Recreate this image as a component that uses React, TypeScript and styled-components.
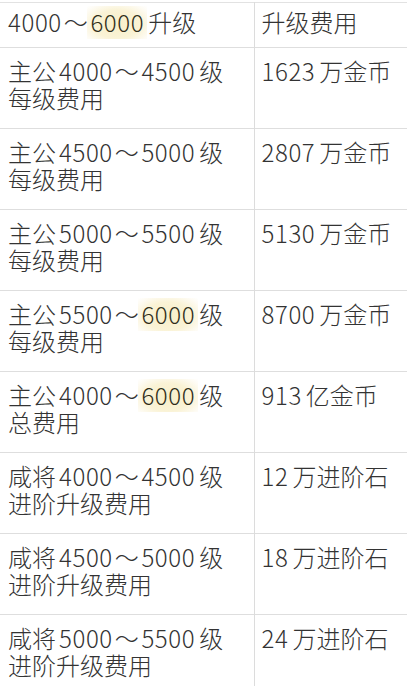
import React from 'react';
import styled, { createGlobalStyle } from 'styled-components';

const GlobalStyle = createGlobalStyle`
  html, body {
    margin: 0;
    padding: 0;
    background: #ffffff;
  }
  body {
    font-family: "Noto Sans CJK SC", "Noto Sans", sans-serif;
    color: #333333;
  }
`;

const Page = styled.div`
  width: 407px;
  height: 694px;
  overflow: hidden;
  padding-top: 2px;
  box-sizing: border-box;
`;

const Table = styled.table`
  width: 407px;
  border-collapse: collapse;
  table-layout: fixed;
  border-top: 1px solid #e2e2e2;
`;

const Col = styled.col<{ $w?: number }>`
  width: ${(p) => (p.$w ? `${p.$w}px` : 'auto')};
`;

const Row = styled.tr<{ $head?: boolean; $last?: boolean }>`
  height: ${(p) => (p.$head ? 45 : p.$last ? 71 : 81)}px;
  border-bottom: ${(p) => (p.$last ? 'none' : '1px solid #dedede')};
`;

const Cell = styled.td<{ $head?: boolean; $right?: boolean }>`
  padding: ${(p) => (p.$head ? '5px' : '9px')} 0 0 ${(p) => (p.$right ? '7px' : '8px')};
  vertical-align: top;
  font-size: 24px;
  font-weight: 300;
  line-height: 27px;
  border-right: ${(p) => (p.$right ? 'none' : '1px solid #dcdcdc')};
  white-space: nowrap;
  overflow: hidden;
`;

const Line = styled.div`
  height: 27px;
`;

// digits sit a little apart from the Chinese around them
const Num = styled.span<{ $lead?: boolean }>`
  margin: 0 4px 0 ${(p) => (p.$lead ? 0 : 3)}px;
  letter-spacing: 0.6px;
`;

const Tilde = styled.span`
  margin: 0 2px;
`;

const Mark = styled.span`
  display: inline-block;
  padding: 2px 3px 4px;
  margin: -2px -3px -4px;
  background: radial-gradient(ellipse at 50% 55%, #f8efc9 0%, #faf3d6 55%, rgba(253, 249, 236, 0.6) 85%, rgba(255, 255, 255, 0) 100%);
  color: #2f2d18;
`;

interface RowData {
  prefix: string;
  from: string;
  to: string;
  toHl?: boolean;
  second: string;
  value: string;
  unit: string;
}

const rows: RowData[] = [
  { prefix: '主公', from: '4000', to: '4500', second: '每级费用', value: '1623', unit: '万金币' },
  { prefix: '主公', from: '4500', to: '5000', second: '每级费用', value: '2807', unit: '万金币' },
  { prefix: '主公', from: '5000', to: '5500', second: '每级费用', value: '5130', unit: '万金币' },
  { prefix: '主公', from: '5500', to: '6000', toHl: true, second: '每级费用', value: '8700', unit: '万金币' },
  { prefix: '主公', from: '4000', to: '6000', toHl: true, second: '总费用', value: '913', unit: '亿金币' },
  { prefix: '咸将', from: '4000', to: '4500', second: '进阶升级费用', value: '12', unit: '万进阶石' },
  { prefix: '咸将', from: '4500', to: '5000', second: '进阶升级费用', value: '18', unit: '万进阶石' },
  { prefix: '咸将', from: '5000', to: '5500', second: '进阶升级费用', value: '24', unit: '万进阶石' },
];

const Range = ({ from, to, hl, lead }: { from: string; to: string; hl?: boolean; lead?: boolean }) => (
  <Num $lead={lead}>
    {from}
    <Tilde>～</Tilde>
    {hl ? <Mark>{to}</Mark> : to}
  </Num>
);

export default function App() {
  return (
    <>
      <GlobalStyle />
      <Page>
        <Table>
          <colgroup>
            <Col $w={254} />
            <Col />
          </colgroup>
          <tbody>
            <Row $head>
              <Cell $head>
                <Line>
                  <Range from="4000" to="6000" hl lead />
                  升级
                </Line>
              </Cell>
              <Cell $head $right>
                <Line>升级费用</Line>
              </Cell>
            </Row>
            {rows.map((r, i) => (
              <Row key={i} $last={i === rows.length - 1}>
                <Cell>
                  <Line>
                    {r.prefix}
                    <Range from={r.from} to={r.to} hl={r.toHl} />级
                  </Line>
                  <Line>{r.second}</Line>
                </Cell>
                <Cell $right>
                  <Line>
                    <Num $lead>{r.value}</Num>
                    {r.unit}
                  </Line>
                </Cell>
              </Row>
            ))}
          </tbody>
        </Table>
      </Page>
    </>
  );
}
